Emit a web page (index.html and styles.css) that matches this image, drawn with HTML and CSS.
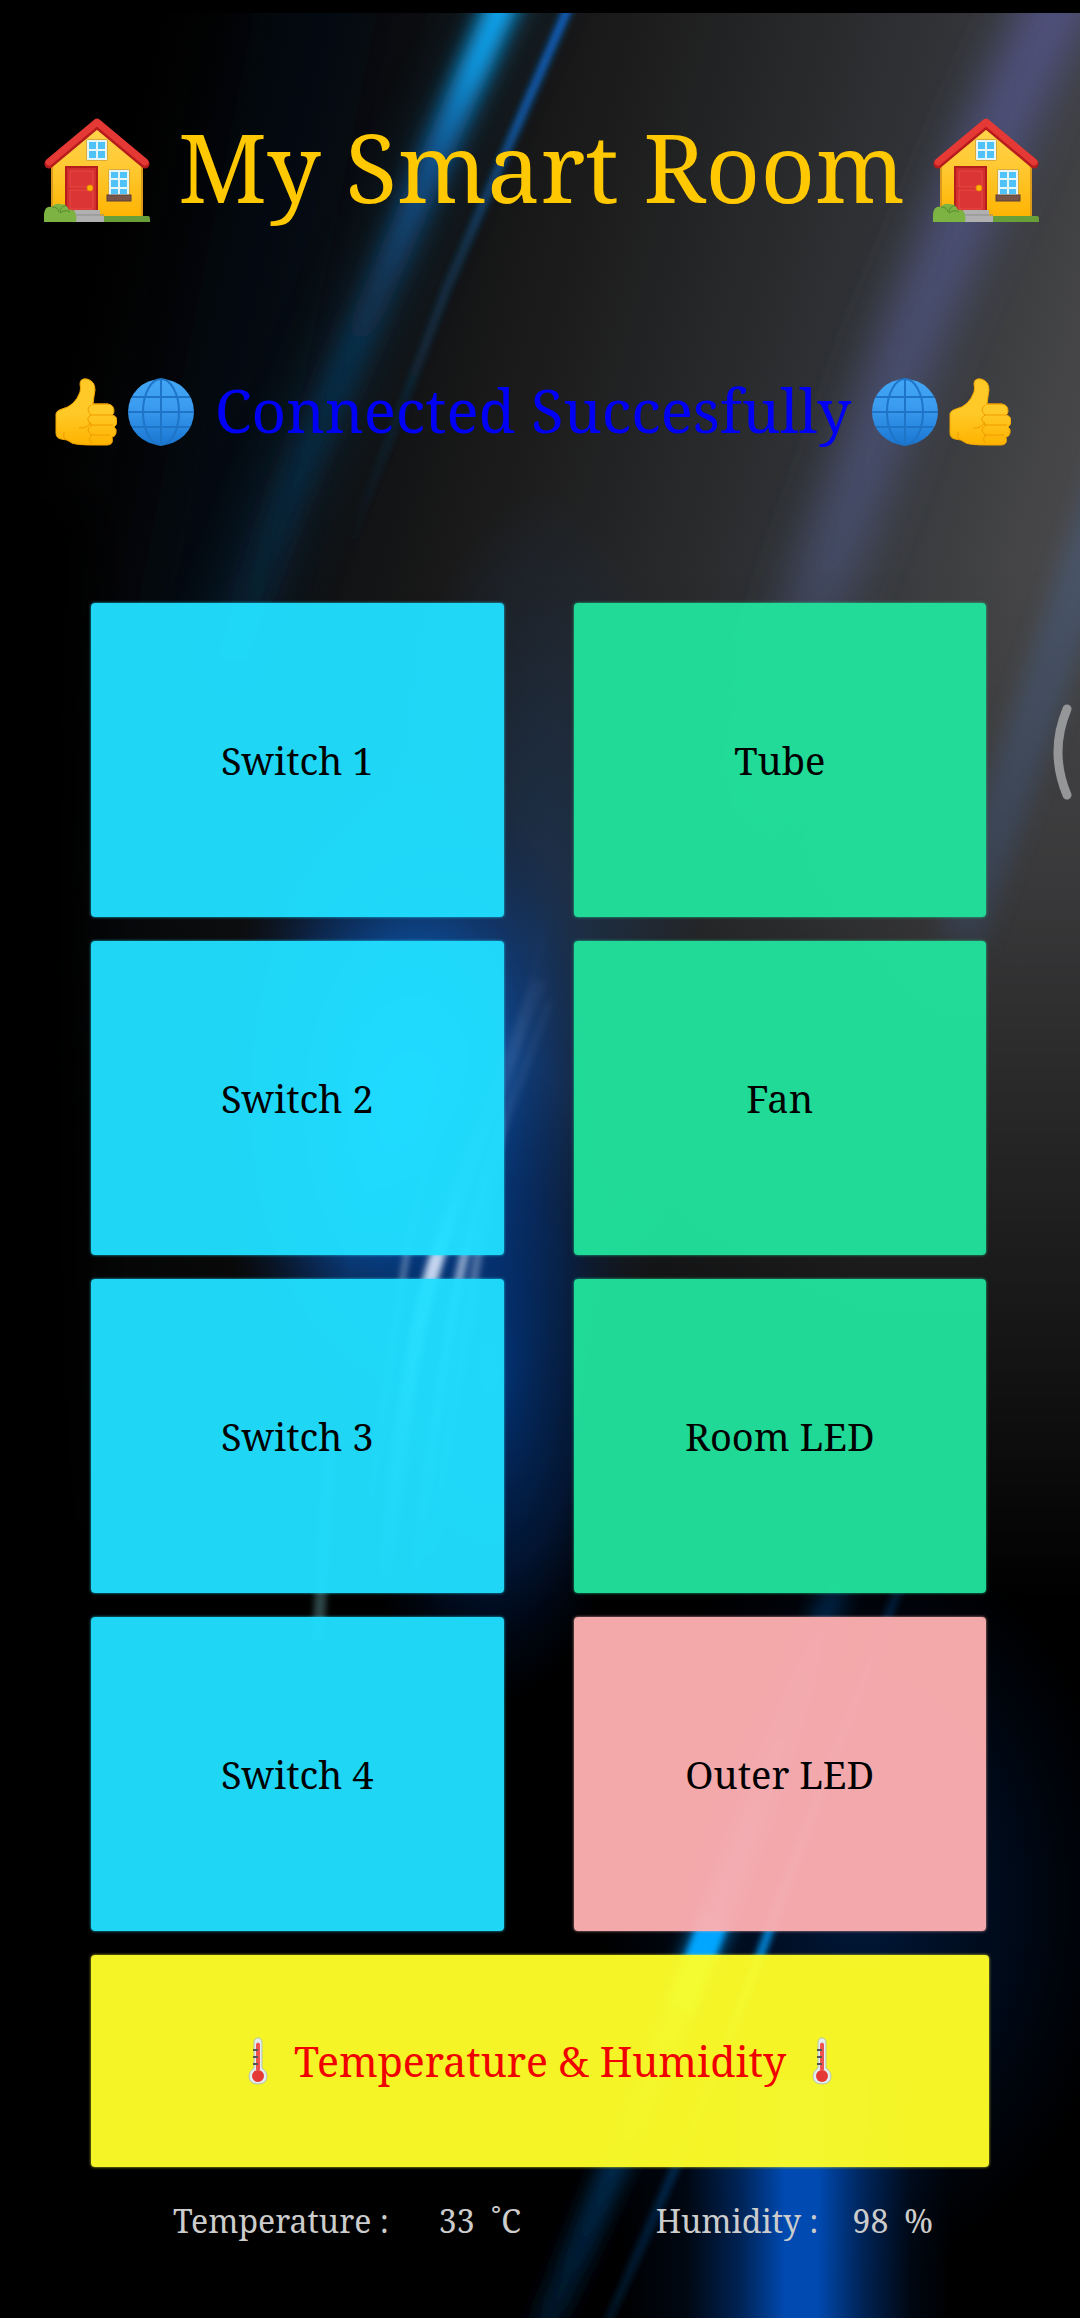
FILE: index.html
```
<!DOCTYPE html>
<html lang="en">
<head>
<meta charset="utf-8">
<meta name="viewport" content="width=device-width, initial-scale=1">
<title>My Smart Room</title>
<link rel="stylesheet" href="styles.css">
</head>
<body>
<svg class="symbols" aria-hidden="true">
  <defs>
    <linearGradient id="wall" x1="0" y1="0" x2="0" y2="1"><stop offset="0" stop-color="#ffd54f"/><stop offset=".45" stop-color="#ffc933"/><stop offset="1" stop-color="#ffb300"/></linearGradient>
    <linearGradient id="sea" x1="0" y1="0" x2="0" y2="1"><stop offset="0" stop-color="#42a5f5"/><stop offset=".4" stop-color="#3c9df0"/><stop offset="1" stop-color="#1976d2"/></linearGradient>
    <linearGradient id="skin" x1="0" y1="0" x2="0" y2="1"><stop offset=".5" stop-color="#ffca28"/><stop offset="1" stop-color="#ffb300"/></linearGradient>
    <symbol id="house" viewBox="0 0 106 106">
      <path d="M8 42 53 6l45 36v60H8z" fill="url(#wall)" stroke="#d99a1c" stroke-width="2"/>
      <path d="M5 47 53 7l48 40" fill="none" stroke="#b71c1c" stroke-width="9" stroke-linecap="round" stroke-linejoin="round"/>
      <path d="M5 45 53 5l48 40" fill="none" stroke="#e53935" stroke-width="7" stroke-linecap="round" stroke-linejoin="round"/>
      <rect x="42" y="22" width="22" height="22" rx="2" fill="#d6aa3c"/><rect x="43" y="23" width="20" height="20" fill="#e8f5f5"/>
      <path d="M45 25h7v7h-7zM54 25h7v7h-7zM45 34h7v7h-7zM54 34h7v7h-7z" fill="#4fc3f7"/>
      <rect x="22" y="50" width="31" height="45" fill="#d32f2f" stroke="#b71c1c" stroke-width="2"/>
      <path d="M26 54h23v16H26zM26 73h23v19H26z" fill="#dc3535" stroke="#e84a44" stroke-width="1"/>
      <circle cx="46" cy="71" r="3" fill="#ffb300" stroke="#e68900"/>
      <rect x="64" y="52" width="22" height="28" rx="2" fill="#d6aa3c"/><rect x="65" y="53" width="20" height="26" fill="#e8f5f5"/>
      <path d="M67 55h7v6h-7zM76 55h7v6h-7zM67 63h7v7h-7zM76 63h7v7h-7zM67 72h7v5h-7zM76 72h7v5h-7z" fill="#4fc3f7"/>
      <rect x="63" y="78" width="24" height="6" fill="#795548" stroke="#5d4037"/>
      <path d="M10 99h94q2 0 2 3v3H10z" fill="#689f38"/>
      <path d="M30 93h26v6h4v6H30z" fill="#b0b0b0"/><path d="M30 98h30" stroke="#8d8d8d"/>
      <path d="M0 105V97q1-9 8-7 3-4 8-3 7 0 9 6 6-1 7 5 1 4 0 7z" fill="#7cb342"/>
      <path d="M8 90q6 0 7 5M22 88q-6 2-6 8M16 96q6-4 10-1" fill="none" stroke="#558b2f" stroke-width="1"/>
    </symbol>
    <symbol id="thumb" viewBox="0 0 62 68">
      <path d="M25 6q0-6 7-5 8 2 8 11-1 6-2 14h15q6 1 6 7 0 3-2 4 5 1 5 6 0 4-3 6 3 2 2 6-1 4-4 4 2 8-5 8H38Q22 67 17 65q-5-4-11-4-5-1-5-6V38q-1-5 6-7 13-3 18-17 1-4 0-8z" fill="url(#skin)" stroke="#f2a600" stroke-width="1"/>
      <path d="M36 27q-6 4 0 10-7 4 1 10-8 5 0 10-5 5 0 8M37 26h16M35 37h22M35 47h23M35 57h20M24 50q8 1 12-6M9 54q-1 5 1 8" fill="none" stroke="#f09b00" stroke-width="1"/>
    </symbol>
    <symbol id="globe" viewBox="0 0 68 68">
      <circle cx="34" cy="34" r="33" fill="url(#sea)"/>
      <g fill="none" stroke="#1e74c6" stroke-width="2"><ellipse cx="34" cy="34" rx="18" ry="33"/><path d="M34 1v66M1 34h66M5 19h58M5 49h58"/></g>
    </symbol>
    <symbol id="thermo" viewBox="0 0 20 48">
      <path d="M6 6q0-5 4-5t4 5v25q5 3 5 8 0 8-9 8t-9-8q0-5 5-8z" fill="#e3eef2" stroke="#b9c4a8" stroke-width="1"/>
      <path d="M8 7q2-3 4 0v26H8z" fill="#ef5350"/><circle cx="10" cy="39" r="6" fill="#e53935"/>
      <path d="M5 13h5M5 20h5M5 27h5" stroke="#555" stroke-width="2"/>
    </symbol>
  </defs>
</svg>

<svg class="backdrop" viewBox="0 0 1080 2305" preserveAspectRatio="none" aria-hidden="true">
  <defs>
    <filter id="b3" filterUnits="userSpaceOnUse" x="-200" y="-100" width="1480" height="2518"><feGaussianBlur stdDeviation="3"/></filter>
    <filter id="b10" filterUnits="userSpaceOnUse" x="-200" y="-100" width="1480" height="2518"><feGaussianBlur stdDeviation="10"/></filter>
    <filter id="b24" filterUnits="userSpaceOnUse" x="-200" y="-100" width="1480" height="2518"><feGaussianBlur stdDeviation="24"/></filter>
    <linearGradient id="grey" gradientUnits="userSpaceOnUse" x1="130" y1="100" x2="1110" y2="360"><stop offset="0" stop-color="#000"/><stop offset=".2" stop-color="#080a0d"/><stop offset=".45" stop-color="#1b1b1b"/><stop offset=".75" stop-color="#303235"/><stop offset="1" stop-color="#48484a"/></linearGradient>
    <linearGradient id="dusk" gradientUnits="userSpaceOnUse" x1="0" y1="560" x2="0" y2="1600"><stop offset="0" stop-color="#000" stop-opacity="0"/><stop offset=".3" stop-color="#000" stop-opacity=".2"/><stop offset=".7" stop-color="#000" stop-opacity=".65"/><stop offset="1" stop-color="#000"/></linearGradient>
    <linearGradient id="ray" gradientUnits="userSpaceOnUse" x1="0" y1="0" x2="0" y2="700"><stop offset="0" stop-color="#0fb0ff"/><stop offset=".1" stop-color="#0d9ce8"/><stop offset=".24" stop-color="#0d64b0" stop-opacity=".75"/><stop offset=".42" stop-color="#0c426e" stop-opacity=".6"/><stop offset=".7" stop-color="#0c3558" stop-opacity=".4"/><stop offset="1" stop-color="#0a3050" stop-opacity="0"/></linearGradient>
    <linearGradient id="thin" gradientUnits="userSpaceOnUse" x1="0" y1="0" x2="0" y2="560"><stop offset="0" stop-color="#0d60c0"/><stop offset=".22" stop-color="#0e56a0"/><stop offset=".45" stop-color="#103c60" stop-opacity=".7"/><stop offset="1" stop-color="#103c60" stop-opacity="0"/></linearGradient>
    <linearGradient id="violet" gradientUnits="userSpaceOnUse" x1="0" y1="0" x2="0" y2="900"><stop offset="0" stop-color="#525488"/><stop offset=".6" stop-color="#4c567c" stop-opacity=".8"/><stop offset="1" stop-color="#4c567c" stop-opacity="0"/></linearGradient>
    <linearGradient id="wisp" gradientUnits="userSpaceOnUse" x1="0" y1="900" x2="0" y2="1620"><stop offset="0" stop-color="#7da0d0" stop-opacity="0"/><stop offset=".3" stop-color="#88a4d4" stop-opacity=".2"/><stop offset=".5" stop-color="#dce8ff" stop-opacity=".9"/><stop offset=".6" stop-color="#dce8ff" stop-opacity=".8"/><stop offset="1" stop-color="#b0c8ff" stop-opacity="0"/></linearGradient>
    <linearGradient id="low" gradientUnits="userSpaceOnUse" x1="0" y1="1580" x2="0" y2="2318"><stop offset="0" stop-color="#004080" stop-opacity=".4"/><stop offset=".42" stop-color="#00a0ff"/><stop offset=".54" stop-color="#00a0ff"/><stop offset=".78" stop-color="#013058"/><stop offset="1" stop-color="#01182c"/></linearGradient>
    <radialGradient id="core"><stop offset="0" stop-color="#0090ff"/><stop offset=".35" stop-color="#0866d0" stop-opacity=".85"/><stop offset=".7" stop-color="#083c88" stop-opacity=".45"/><stop offset="1" stop-color="#04204a" stop-opacity="0"/></radialGradient>
    <radialGradient id="navy"><stop offset="0" stop-color="#003f94" stop-opacity=".8"/><stop offset=".6" stop-color="#00245c" stop-opacity=".5"/><stop offset="1" stop-color="#001030" stop-opacity="0"/></radialGradient>
    <radialGradient id="slate"><stop offset="0" stop-color="#1c3c66" stop-opacity=".7"/><stop offset="1" stop-color="#1c3c66" stop-opacity="0"/></radialGradient>
    <linearGradient id="beam" x1="0" x2="1" y1="0" y2="0"><stop offset="0" stop-color="#0050c4" stop-opacity="0"/><stop offset=".2" stop-color="#0048b0" stop-opacity=".1"/><stop offset=".36" stop-color="#004cb8" stop-opacity=".45"/><stop offset=".5" stop-color="#0052c4" stop-opacity=".9"/><stop offset=".6" stop-color="#0052c4" stop-opacity=".9"/><stop offset=".74" stop-color="#004cb8" stop-opacity=".45"/><stop offset=".88" stop-color="#0048b0" stop-opacity=".1"/><stop offset="1" stop-color="#0050c4" stop-opacity="0"/></linearGradient>
  </defs>
  <g transform="translate(0 -13)">
    <rect width="1080" height="2318" fill="#000"/>
    <rect width="1080" height="1700" fill="url(#grey)"/>
    <g fill="none" stroke-linejoin="round">
      <path d="M330 -60L180 700" stroke="#04101f" stroke-width="120" opacity=".35" filter="url(#b24)"/>
      <path d="M540 -60L441 145L372 306L289 498L220 690" stroke="#0d3c5c" stroke-width="60" opacity=".35" filter="url(#b24)"/>
      <path d="M530 -60L441 145L372 306L289 498L220 690" stroke="url(#ray)" stroke-width="30" filter="url(#b10)"/>
      <path d="M596 -60L566 13L517 126L446 290L365 505L330 620" stroke="url(#thin)" stroke-width="9" filter="url(#b3)"/>
      <path d="M1088 -60L1006 115L909 345L827 574L700 940" stroke="url(#violet)" stroke-width="58" filter="url(#b24)"/>
      <path d="M1120 460L960 940" stroke="#4a6184" stroke-width="46" opacity=".5" filter="url(#b10)"/>
    </g>
    <rect width="1080" height="1760" y="560" fill="url(#dusk)"/>
    <ellipse cx="540" cy="950" rx="160" ry="460" fill="url(#slate)"/>
    <ellipse cx="410" cy="1110" rx="200" ry="350" fill="url(#core)"/>
    <ellipse cx="490" cy="1380" rx="150" ry="330" fill="url(#navy)"/>
    <path d="M-60 500H90V1700H-60z" fill="#000" filter="url(#b24)"/>
    <g fill="none">
      <path d="M575 800Q525 1000 500 1130T430 1560" stroke="url(#wisp)" stroke-width="9" opacity=".4" filter="url(#b3)"/>
      <path d="M540 980Q460 1180 433 1270T385 1580" stroke="url(#wisp)" stroke-width="15" filter="url(#b3)"/>
      <path d="M550 1000Q480 1180 461 1270T415 1580" stroke="url(#wisp)" stroke-width="9" opacity=".7" filter="url(#b3)"/>
      <path d="M450 1080Q415 1200 404 1270T370 1500" stroke="url(#wisp)" stroke-width="5" opacity=".5" filter="url(#b3)"/>
      <path d="M330 1440L318 1640" stroke="#5b8b8d" stroke-width="12" opacity=".5" filter="url(#b3)"/>
    </g>
    <ellipse cx="860" cy="1900" rx="270" ry="380" fill="url(#navy)" opacity=".5"/>
    <g fill="none" stroke="url(#low)">
      <path d="M845 1560Q765 1790 703 1950T535 2350" stroke-width="26" filter="url(#b10)"/>
      <path d="M716 1915Q703 1950 680 2010" stroke="#00a6ff" stroke-width="28" filter="url(#b3)"/>
      <path d="M910 1560Q820 1790 764 1945T595 2350" stroke-width="9" opacity=".8" filter="url(#b3)"/>
    </g>
    <rect x="620" y="2080" width="330" height="238" fill="url(#beam)"/>
  </g>
</svg>

<main class="app">
  <h1 class="title">
    <svg class="house" aria-hidden="true"><use href="#house"/></svg>
    <span class="title-text">My Smart Room</span>
    <svg class="house" aria-hidden="true"><use href="#house"/></svg>
  </h1>
  <p class="status" role="status">
    <svg class="thumb" aria-hidden="true"><use href="#thumb"/></svg>
    <svg class="globe" aria-hidden="true"><use href="#globe"/></svg>
    <span class="status-text">Connected Succesfully</span>
    <svg class="globe" aria-hidden="true"><use href="#globe"/></svg>
    <svg class="thumb" aria-hidden="true"><use href="#thumb"/></svg>
  </p>

  <div class="switches">
    <button class="tile cyan" type="button">Switch 1</button>
    <button class="tile green" type="button">Tube</button>
    <button class="tile cyan" type="button">Switch 2</button>
    <button class="tile green" type="button">Fan</button>
    <button class="tile cyan" type="button">Switch 3</button>
    <button class="tile green" type="button">Room LED</button>
    <button class="tile cyan" type="button">Switch 4</button>
    <button class="tile pink" type="button">Outer LED</button>
  </div>
  <button class="tile climate" type="button">
    <svg class="thermo" aria-hidden="true"><use href="#thermo"/></svg>
    <span>Temperature &amp; Humidity</span>
    <svg class="thermo" aria-hidden="true"><use href="#thermo"/></svg>
  </button>

  <div class="readings">
    <p class="reading temperature"><span>Temperature :</span><span class="value">33</span><span>˚C</span></p>
    <p class="reading humidity"><span>Humidity :</span><span class="value">98</span><span>%</span></p>
  </div>
</main>

<svg class="edge-handle" viewBox="0 0 20 96" aria-hidden="true"><path d="M14 5Q-4 48 14 91" fill="none" stroke="#959697" stroke-width="9" stroke-linecap="round"/></svg>
</body>
</html>
```
FILE: styles.css
```
* {
  box-sizing: border-box;
}

body {
  position: relative;
  margin: 0;
  min-height: 100vh;
  border-top: 13px solid #000;
  background: #000;
  font-family: "Noto Serif", "Liberation Serif", serif;
  overflow-x: hidden;
}

.symbols {
  position: absolute;
  width: 0;
  height: 0;
}

.backdrop {
  position: absolute;
  inset: 0;
  width: 100%;
  height: 100%;
}

.app {
  position: relative;
  padding: 102px 91px 0;
}

.title,
.status {
  display: flex;
  justify-content: center;
  align-items: center;
  margin: 0 -91px;
  font-weight: 400;
  white-space: nowrap;
}

.title {
  gap: 28px;
  height: 110px;
  padding-left: 3px;
  color: #ffc800;
  font-size: 95px;
  line-height: 110px;
}

.title-text {
  padding-bottom: 8px;
}

.status {
  gap: 10px;
  height: 68px;
  margin-top: 153px;
  padding-right: 14px;
  color: #0000f5;
  font-size: 60px;
  line-height: 68px;
}

.status-text {
  margin: 0 10px;
  padding-bottom: 4px;
}

.house {
  width: 106px;
  height: 106px;
}

.thumb {
  width: 62px;
  height: 68px;
}

.globe {
  width: 68px;
  height: 68px;
}

.switches {
  display: grid;
  grid-template-columns: 1fr 1fr;
  gap: 24px 70px;
  margin-top: 157px;
  padding-right: 3px;
}

.tile {
  height: 314px;
  padding: 0;
  border: 0;
  border-radius: 4px;
  color: #000;
  font-family: inherit;
  font-size: 38px;
  cursor: pointer;
}

.cyan {
  background: rgba(32, 223, 255, .96);
  box-shadow: 0 0 3px rgba(32, 223, 255, .8);
}

.green {
  background: rgba(33, 226, 156, .96);
  box-shadow: 0 0 3px rgba(33, 226, 156, .8);
}

.pink {
  background: rgba(253, 175, 177, .96);
  box-shadow: 0 0 3px rgba(253, 175, 177, .8);
}

.climate {
  display: flex;
  justify-content: center;
  align-items: center;
  gap: 26px;
  width: 100%;
  height: 212px;
  margin-top: 24px;
  background: rgba(254, 254, 40, .96);
  box-shadow: 0 0 3px rgba(254, 254, 40, .8);
  color: #f00000;
  font-size: 41px;
}

.thermo {
  width: 20px;
  height: 48px;
}

.readings {
  display: flex;
  justify-content: space-between;
  padding: 30px 56px 0 82px;
  color: #ccc;
  font-size: 32px;
  line-height: 48px;
}

.reading {
  display: flex;
  gap: 16px;
  margin: 0;
  white-space: nowrap;
}

.temperature .value {
  margin-left: 34px;
}

.humidity .value {
  margin-left: 18px;
}

.edge-handle {
  position: absolute;
  top: 691px;
  right: 7px;
  width: 20px;
  height: 96px;
}
```
